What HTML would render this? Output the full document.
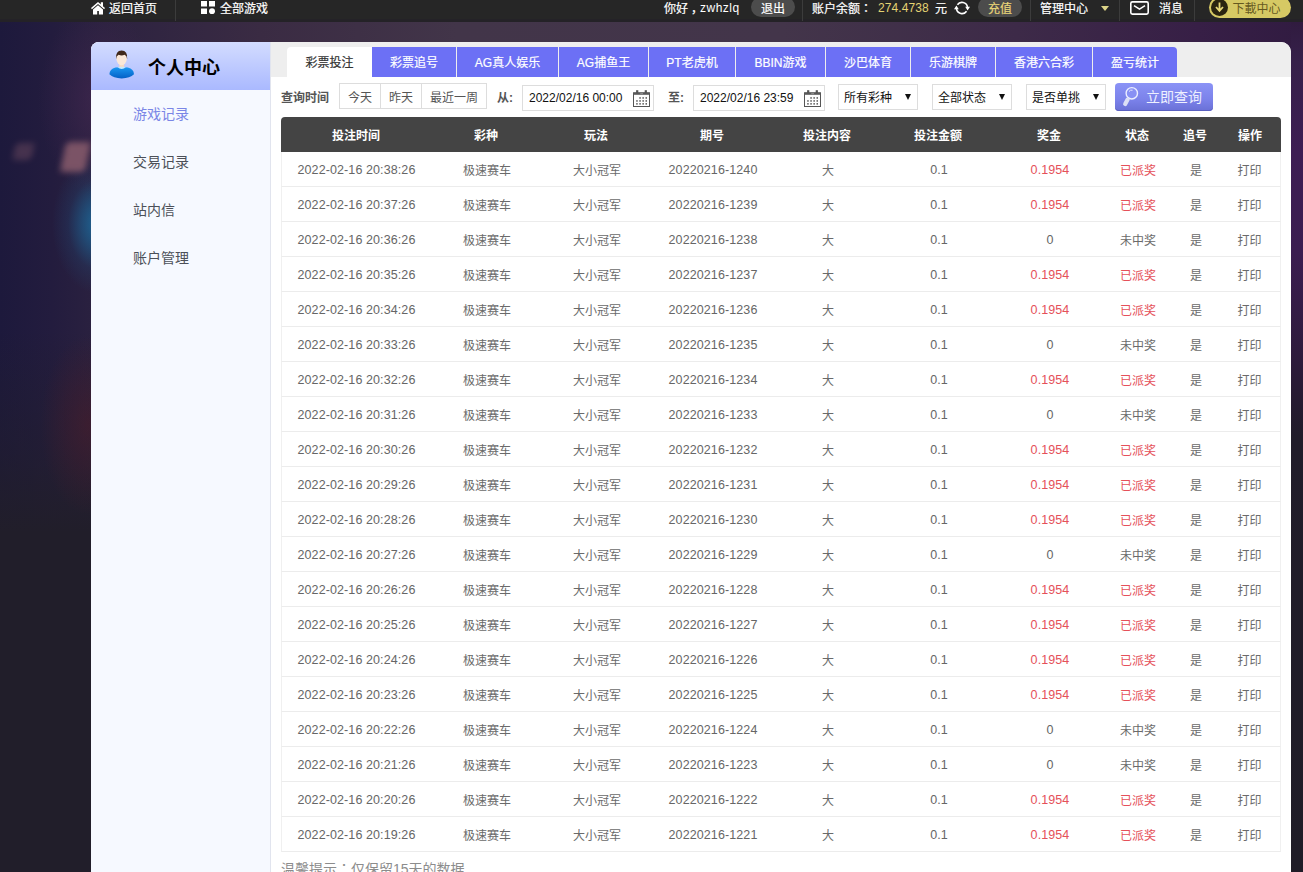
<!DOCTYPE html>
<html lang="zh-CN">
<head>
<meta charset="utf-8">
<title>个人中心 - 游戏记录</title>
<style>
*{box-sizing:border-box;margin:0;padding:0}
html,body{width:1303px;height:872px;overflow:hidden}
body{font-family:"Liberation Sans","Noto Sans CJK SC",sans-serif;font-size:12px;color:#666;position:relative;background:#221e2c}
.bg{position:absolute;left:0;top:0;width:1303px;height:872px;overflow:hidden;
background:
 radial-gradient(ellipse 60px 95px at 98px 100px, rgba(72,40,84,.55) 0, rgba(72,40,84,.25) 50%, rgba(72,40,84,0) 100%),
 radial-gradient(ellipse 46px 70px at 98px 224px, rgba(28,110,160,.9) 0, rgba(28,105,155,.55) 35%, rgba(30,90,140,.2) 65%, rgba(30,90,140,0) 100%),
 radial-gradient(ellipse 48px 90px at 88px 425px, rgba(78,28,42,.52) 0, rgba(78,28,42,.3) 45%, rgba(78,28,42,0) 100%),
 linear-gradient(180deg,rgba(33,30,42,0) 0,rgba(33,30,42,0) 38%,rgba(33,30,42,.5) 52%,#211e2a 61%),
 linear-gradient(90deg,#1d193c 0,#231c3e 4%,#2c2240 8%,#3a2b43 20%,#423549 35%,#43354a 60%,#3d2a48 78%,#371f46 92%,#311b41 100%);
}
.bokeh{position:absolute;background:#84596a;filter:blur(3px);transform:skewX(-12deg);border-radius:4px}
.topbar{position:absolute;left:0;top:0;width:1303px;height:22px;background:#262626;color:#fff;-webkit-text-stroke:.2px currentColor;font-size:12px;line-height:15px;border-bottom:3px solid #242227}
.topbar span,.topbar i,.topbar svg{position:absolute;top:0;white-space:nowrap;font-style:normal}
.topbar span{top:2px}
.sep{width:1px;height:21px;background:#3c3c3c}
.pill{height:20px;border-radius:10px;background:#4c4c4c;text-align:center;top:-3px!important;line-height:25px}
.panel{position:absolute;left:91px;top:42px;width:1200px;height:830px;background:#fff;border-radius:8px 10px 0 0;overflow:hidden}
.side{position:absolute;left:0;top:0;width:180px;height:830px;background:#f6f9ff;border-right:1px solid #e1e4ee}
.side h2{height:48px;background:linear-gradient(180deg,#d3dcff 0,#aab9ff 100%);font-size:18px;font-weight:bold;color:#000;line-height:52px;padding-left:57px;position:relative}
.side h2 svg{position:absolute;left:17px;top:7px}
.side a{display:block;position:absolute;left:42px;font-size:14px;color:#4c5058;line-height:20px}
.side a.on{color:#7a86e6}
.tabs{position:absolute;left:180px;top:0;width:1020px;height:35px;background:#eee}
.tabs b{-webkit-text-stroke:.2px currentColor;position:absolute;top:5px;height:30px;font-weight:normal;font-size:12px;line-height:32px;text-align:center;color:#fff;background:#6c70f5}
.tabs b.on{background:#fff;color:#333;border-radius:4px 0 0 0}
.filt{position:absolute;left:0;top:0;width:1200px;height:75px;font-size:12px;color:#444}
.filt>*{position:absolute}
.lb{font-weight:bold;line-height:14px;top:49px;color:#555}
.box{border:1px solid #ddd;background:#fff;height:26px;line-height:24px;color:#111}
.sel{line-height:26px}
.qb{line-height:25px;padding-top:2px}
.qb{top:41px;text-align:center;color:#555!important}
.box svg{position:absolute}
.sel:after{content:"";position:absolute;right:6px;top:9px;border:3.2px solid transparent;border-top:6.4px solid #111;border-bottom:0}
table{position:absolute;left:190px;top:75px;width:1000px;border-collapse:separate;border-spacing:0;table-layout:fixed;font-size:12px}
th{height:35px;background:#444;color:#fff;font-weight:bold;text-align:center;padding-bottom:1px}
th:first-child{border-radius:4px 0 0 0}
th:last-child{border-radius:0 4px 0 0}
td{height:35px;text-align:center;color:#6a6a6a;border-bottom:1px solid #ececec;padding-top:1px;padding-left:2px}
tbody tr td:first-child{border-left:1px solid #f0f0f0;padding-left:0}
tbody tr td:last-child{border-right:1px solid #f0f0f0;padding-left:0}
td.n{font-size:12.5px;letter-spacing:.1px;color:#666}
td.r{color:#e5505a}
.p{font-family:"Liberation Sans","Noto Sans CJK TC",sans-serif}
.tip{position:absolute;left:190px;top:817px;font-size:14px;color:#8c8c8c;white-space:nowrap;line-height:20px}
</style>
</head>
<body>
<div class="bg">
 <div style="position:absolute;left:1291px;top:22px;width:12px;height:850px;background:linear-gradient(180deg,#301b3f 0,#36204a 40px,#3d1d53 130px,#3b1d50 230px,#351c47 280px,#2d1b3b 340px,#251b30 385px,#211c2a 415px,#1f1c27 850px)"></div>
 <div class="bokeh" style="left:14px;top:143px;width:19px;height:17px;opacity:.38"></div>
 <div class="bokeh" style="left:63px;top:142px;width:25px;height:30px;opacity:.9"></div>
</div>
<div class="topbar">
 <svg style="left:91px;top:2px" width="14" height="13" viewBox="0 0 14 13"><path d="M7 0 L14 6.1 L13.1 7.2 L7 1.9 L0.9 7.2 L0 6.1 Z M9.8 0.2 H12 V4.6 L9.8 2.7 Z M7 3.2 L12 7.6 V12.4 H7.9 V9 H6.2 V12.4 H2 V7.6 Z" fill="#fff"/></svg>
 <span style="left:109px">返回首页</span>
 <i class="sep" style="left:175px"></i>
 <svg style="left:201px;top:1px" width="14" height="13" viewBox="0 0 14 13"><rect x="0" y="0" width="6" height="5.5" fill="#fff"/><rect x="8" y="0" width="6" height="5.5" fill="#fff"/><rect x="0" y="7.5" width="6" height="5.5" fill="#fff"/><circle cx="11" cy="10.2" r="3" fill="#fff"/></svg>
 <span style="left:220px">全部游戏</span>
 <span style="left:664px">你好<span style="position:relative;left:3px;top:0">，</span><span style="position:relative;top:-1px;letter-spacing:.5px;-webkit-text-stroke:0">zwhzlq</span></span>
 <span class="pill" style="left:751px;width:44px">退出</span>
 <i class="sep" style="left:802px"></i>
 <span style="left:812px">账户余额</span>
 <span lang="zh-TW" class="p" style="left:860px">：</span>
 <span style="left:878px;top:1px;color:#e4d373;letter-spacing:.1px;-webkit-text-stroke:0">274.4738</span>
 <span style="left:935px">元</span>
 <svg style="left:953px;top:0" width="18" height="16" viewBox="0 0 18 16"><g fill="none" stroke="#fff" stroke-width="1.6"><path d="M4.41 4.79 A5.6 5.6 0 0 1 14.5 7.03"/><path d="M13.59 11.21 A5.6 5.6 0 0 1 3.49 8.97"/></g><path d="M12.2 6.8 L17 6.8 L14.6 10.4 Z M5.8 9.2 L1 9.2 L3.4 5.6 Z" fill="#fff"/></svg>
 <span class="pill" style="left:978px;width:44px;color:#e8d478">充值</span>
 <i class="sep" style="left:1030px"></i>
 <span style="left:1040px">管理中心</span>
 <i style="left:1100.5px;top:6px;width:0;height:0;border:4px solid transparent;border-top:5px solid #dcd488;border-bottom:0"></i>
 <i class="sep" style="left:1119px"></i>
 <svg style="left:1130px;top:1px" width="19" height="14" viewBox="0 0 19 14"><rect x="0.8" y="0.9" width="17.4" height="12.2" rx="1.6" fill="none" stroke="#fff" stroke-width="1.6"/><path d="M4 4.6 L9.5 8.2 L15 4.6" fill="none" stroke="#fff" stroke-width="1.5"/></svg>
 <span style="left:1159px">消息</span>
 <i class="sep" style="left:1194px"></i>
 <span class="pill" style="left:1209px;width:82px;background:#d6c964;color:#66591f;padding-left:13px;height:21px;border-radius:10.5px;line-height:24px;-webkit-text-stroke:0">下載中心</span>
 <svg style="left:1211px;top:-1px" width="17" height="17" viewBox="0 0 17 17"><circle cx="8.5" cy="8.5" r="8.5" fill="#2a2410"/><path d="M8.5 3.5 V11 M5 8 L8.5 11.8 L12 8" fill="none" stroke="#e6d878" stroke-width="1.8"/></svg>
</div>
<div class="panel">
 <div class="side">
  <h2><svg width="28" height="30" viewBox="0 0 28 30"><defs><linearGradient id="bd" x1="0" y1="0" x2="0" y2="1"><stop offset="0" stop-color="#1b98f2"/><stop offset="1" stop-color="#0560c6"/></linearGradient></defs><rect x="11.3" y="13" width="4.8" height="6.5" fill="#f7d9c2"/><path d="M1.4 25.3 Q1.6 20 7.5 18.6 Q13.7 17.5 19.9 18.6 Q25.8 20 26 25.3 Q22 29.4 13.7 29.4 Q5.4 29.4 1.4 25.3 Z" fill="url(#bd)"/><path d="M9.4 18.3 Q13.7 21.6 18 18.3 Q13.7 17.2 9.4 18.3 Z" fill="#c4e9ff"/><ellipse cx="13.6" cy="9.4" rx="5.2" ry="6.8" fill="#fbe8d8"/><path d="M8 10.2 Q7.4 1.6 13.6 1.6 Q19.8 1.6 19.2 10.2 Q18.8 6.6 16.6 5.8 Q13.6 7 10.6 5.8 Q8.4 6.6 8 10.2 Z" fill="#40281a"/></svg>个人中心</h2>
  <a class="on" style="top:62px">游戏记录</a>
  <a style="top:110px">交易记录</a>
  <a style="top:158px">站内信</a>
  <a style="top:206px">账户管理</a>
 </div>
 <div class="tabs">
  <b class="on" style="left:16px;width:85px">彩票投注</b>
  <b style="left:101px;width:84px">彩票追号</b>
  <b style="left:186px;width:101px">AG真人娱乐</b>
  <b style="left:288px;width:89px">AG捕鱼王</b>
  <b style="left:378px;width:86px">PT老虎机</b>
  <b style="left:465px;width:89px">BBIN游戏</b>
  <b style="left:555px;width:84px">沙巴体育</b>
  <b style="left:640px;width:84px">乐游棋牌</b>
  <b style="left:725px;width:96px">香港六合彩</b>
  <b style="left:822px;width:84px;border-radius:0 4px 0 0">盈亏统计</b>
 </div>
 <div class="filt">
  <span class="lb" style="left:190px">查询时间</span>
  <span class="box qb" style="left:248px;width:42px">今天</span>
  <span class="box qb" style="left:289px;width:42px">昨天</span>
  <span class="box qb" style="left:330px;width:66px">最近一周</span>
  <span class="lb" style="left:406px">从:</span>
  <span class="box" style="left:431px;top:43px;width:132px;padding-left:6px">2022/02/16 00:00<svg style="left:110px;top:4px" width="17" height="17" viewBox="0 0 17 17"><rect x="0.5" y="2.8" width="16" height="13.7" fill="none" stroke="#555" stroke-width="1"/><rect x="0.5" y="2.6" width="16" height="2.2" fill="#5a5a5a"/><rect x="3.1" y="0.2" width="2.2" height="3" fill="#555"/><rect x="11.7" y="0.2" width="2.2" height="3" fill="#555"/><rect x="7.2" y="2.9" width="2.8" height="1.4" fill="#8a8a8a"/><g fill="#555"><rect x="6.3" y="7.2" width="1.5" height="1.5"/><rect x="9.4" y="7.2" width="1.5" height="1.5"/><rect x="12.5" y="7.2" width="1.5" height="1.5"/><rect x="3.2" y="10.2" width="1.5" height="1.5"/><rect x="6.3" y="10.2" width="1.5" height="1.5"/><rect x="9.4" y="10.2" width="1.5" height="1.5"/><rect x="12.5" y="10.2" width="1.5" height="1.5"/><rect x="3.2" y="13.1" width="1.5" height="1.5"/><rect x="6.3" y="13.1" width="1.5" height="1.5"/><rect x="9.4" y="13.1" width="1.5" height="1.5"/><rect x="12.5" y="13.1" width="1.5" height="1.5"/></g></svg></span>
  <span class="lb" style="left:577px">至:</span>
  <span class="box" style="left:602px;top:43px;width:132px;padding-left:6px">2022/02/16 23:59<svg style="left:110px;top:4px" width="17" height="17" viewBox="0 0 17 17"><rect x="0.5" y="2.8" width="16" height="13.7" fill="none" stroke="#555" stroke-width="1"/><rect x="0.5" y="2.6" width="16" height="2.2" fill="#5a5a5a"/><rect x="3.1" y="0.2" width="2.2" height="3" fill="#555"/><rect x="11.7" y="0.2" width="2.2" height="3" fill="#555"/><rect x="7.2" y="2.9" width="2.8" height="1.4" fill="#8a8a8a"/><g fill="#555"><rect x="6.3" y="7.2" width="1.5" height="1.5"/><rect x="9.4" y="7.2" width="1.5" height="1.5"/><rect x="12.5" y="7.2" width="1.5" height="1.5"/><rect x="3.2" y="10.2" width="1.5" height="1.5"/><rect x="6.3" y="10.2" width="1.5" height="1.5"/><rect x="9.4" y="10.2" width="1.5" height="1.5"/><rect x="12.5" y="10.2" width="1.5" height="1.5"/><rect x="3.2" y="13.1" width="1.5" height="1.5"/><rect x="6.3" y="13.1" width="1.5" height="1.5"/><rect x="9.4" y="13.1" width="1.5" height="1.5"/><rect x="12.5" y="13.1" width="1.5" height="1.5"/></g></svg></span>
  <span class="box sel" style="left:747px;top:42px;width:80px;padding-left:5px">所有彩种</span>
  <span class="box sel" style="left:841px;top:42px;width:80px;padding-left:5px">全部状态</span>
  <span class="box sel" style="left:935px;top:42px;width:80px;padding-left:5px">是否单挑</span>
  <span style="left:1024px;top:41px;width:98px;height:28px;border-radius:4px;background:linear-gradient(180deg,#8b93f6 0,#7b82ea 60%,#6a70d6 100%);box-shadow:inset 0 -1px 0 #5a60c0;color:#eef0ff;font-size:14px;line-height:28px;padding-left:31px">立即查询<svg style="position:absolute;left:6px;top:3px" width="18" height="22" viewBox="0 0 18 22"><circle cx="10.8" cy="7.3" r="5.7" fill="#8890f4" stroke="#eceeff" stroke-width="1.4"/><path d="M8 5.6 A3.2 3.2 0 0 1 11.6 4.2" fill="none" stroke="#e4e6ff" stroke-width="1"/><path d="M6.6 13.6 L4.2 18" stroke="#dcdff6" stroke-width="4.2" stroke-linecap="round"/></svg></span>
 </div>
 <table>
  <colgroup><col style="width:150px"><col style="width:110px"><col style="width:110px"><col style="width:122px"><col style="width:108px"><col style="width:114px"><col style="width:108px"><col style="width:68px"><col style="width:48px"><col style="width:62px"></colgroup>
  <thead><tr><th>投注时间</th><th>彩种</th><th>玩法</th><th>期号</th><th>投注内容</th><th>投注金额</th><th>奖金</th><th>状态</th><th>追号</th><th>操作</th></tr></thead>
  <tbody>
   <tr><td class="n">2022-02-16 20:38:26</td><td>极速赛车</td><td>大小冠军</td><td class="n">20220216-1240</td><td>大</td><td class="n">0.1</td><td class="n r">0.1954</td><td class="r">已派奖</td><td>是</td><td>打印</td></tr>
   <tr><td class="n">2022-02-16 20:37:26</td><td>极速赛车</td><td>大小冠军</td><td class="n">20220216-1239</td><td>大</td><td class="n">0.1</td><td class="n r">0.1954</td><td class="r">已派奖</td><td>是</td><td>打印</td></tr>
   <tr><td class="n">2022-02-16 20:36:26</td><td>极速赛车</td><td>大小冠军</td><td class="n">20220216-1238</td><td>大</td><td class="n">0.1</td><td class="n">0</td><td>未中奖</td><td>是</td><td>打印</td></tr>
   <tr><td class="n">2022-02-16 20:35:26</td><td>极速赛车</td><td>大小冠军</td><td class="n">20220216-1237</td><td>大</td><td class="n">0.1</td><td class="n r">0.1954</td><td class="r">已派奖</td><td>是</td><td>打印</td></tr>
   <tr><td class="n">2022-02-16 20:34:26</td><td>极速赛车</td><td>大小冠军</td><td class="n">20220216-1236</td><td>大</td><td class="n">0.1</td><td class="n r">0.1954</td><td class="r">已派奖</td><td>是</td><td>打印</td></tr>
   <tr><td class="n">2022-02-16 20:33:26</td><td>极速赛车</td><td>大小冠军</td><td class="n">20220216-1235</td><td>大</td><td class="n">0.1</td><td class="n">0</td><td>未中奖</td><td>是</td><td>打印</td></tr>
   <tr><td class="n">2022-02-16 20:32:26</td><td>极速赛车</td><td>大小冠军</td><td class="n">20220216-1234</td><td>大</td><td class="n">0.1</td><td class="n r">0.1954</td><td class="r">已派奖</td><td>是</td><td>打印</td></tr>
   <tr><td class="n">2022-02-16 20:31:26</td><td>极速赛车</td><td>大小冠军</td><td class="n">20220216-1233</td><td>大</td><td class="n">0.1</td><td class="n">0</td><td>未中奖</td><td>是</td><td>打印</td></tr>
   <tr><td class="n">2022-02-16 20:30:26</td><td>极速赛车</td><td>大小冠军</td><td class="n">20220216-1232</td><td>大</td><td class="n">0.1</td><td class="n r">0.1954</td><td class="r">已派奖</td><td>是</td><td>打印</td></tr>
   <tr><td class="n">2022-02-16 20:29:26</td><td>极速赛车</td><td>大小冠军</td><td class="n">20220216-1231</td><td>大</td><td class="n">0.1</td><td class="n r">0.1954</td><td class="r">已派奖</td><td>是</td><td>打印</td></tr>
   <tr><td class="n">2022-02-16 20:28:26</td><td>极速赛车</td><td>大小冠军</td><td class="n">20220216-1230</td><td>大</td><td class="n">0.1</td><td class="n r">0.1954</td><td class="r">已派奖</td><td>是</td><td>打印</td></tr>
   <tr><td class="n">2022-02-16 20:27:26</td><td>极速赛车</td><td>大小冠军</td><td class="n">20220216-1229</td><td>大</td><td class="n">0.1</td><td class="n">0</td><td>未中奖</td><td>是</td><td>打印</td></tr>
   <tr><td class="n">2022-02-16 20:26:26</td><td>极速赛车</td><td>大小冠军</td><td class="n">20220216-1228</td><td>大</td><td class="n">0.1</td><td class="n r">0.1954</td><td class="r">已派奖</td><td>是</td><td>打印</td></tr>
   <tr><td class="n">2022-02-16 20:25:26</td><td>极速赛车</td><td>大小冠军</td><td class="n">20220216-1227</td><td>大</td><td class="n">0.1</td><td class="n r">0.1954</td><td class="r">已派奖</td><td>是</td><td>打印</td></tr>
   <tr><td class="n">2022-02-16 20:24:26</td><td>极速赛车</td><td>大小冠军</td><td class="n">20220216-1226</td><td>大</td><td class="n">0.1</td><td class="n r">0.1954</td><td class="r">已派奖</td><td>是</td><td>打印</td></tr>
   <tr><td class="n">2022-02-16 20:23:26</td><td>极速赛车</td><td>大小冠军</td><td class="n">20220216-1225</td><td>大</td><td class="n">0.1</td><td class="n r">0.1954</td><td class="r">已派奖</td><td>是</td><td>打印</td></tr>
   <tr><td class="n">2022-02-16 20:22:26</td><td>极速赛车</td><td>大小冠军</td><td class="n">20220216-1224</td><td>大</td><td class="n">0.1</td><td class="n">0</td><td>未中奖</td><td>是</td><td>打印</td></tr>
   <tr><td class="n">2022-02-16 20:21:26</td><td>极速赛车</td><td>大小冠军</td><td class="n">20220216-1223</td><td>大</td><td class="n">0.1</td><td class="n">0</td><td>未中奖</td><td>是</td><td>打印</td></tr>
   <tr><td class="n">2022-02-16 20:20:26</td><td>极速赛车</td><td>大小冠军</td><td class="n">20220216-1222</td><td>大</td><td class="n">0.1</td><td class="n r">0.1954</td><td class="r">已派奖</td><td>是</td><td>打印</td></tr>
   <tr><td class="n">2022-02-16 20:19:26</td><td>极速赛车</td><td>大小冠军</td><td class="n">20220216-1221</td><td>大</td><td class="n">0.1</td><td class="n r">0.1954</td><td class="r">已派奖</td><td>是</td><td>打印</td></tr>
  </tbody>
 </table>
 <div class="tip">温馨提示<span lang="zh-TW" class="p">：</span>仅保留15天的数据</div>
</div>
</body>
</html>
